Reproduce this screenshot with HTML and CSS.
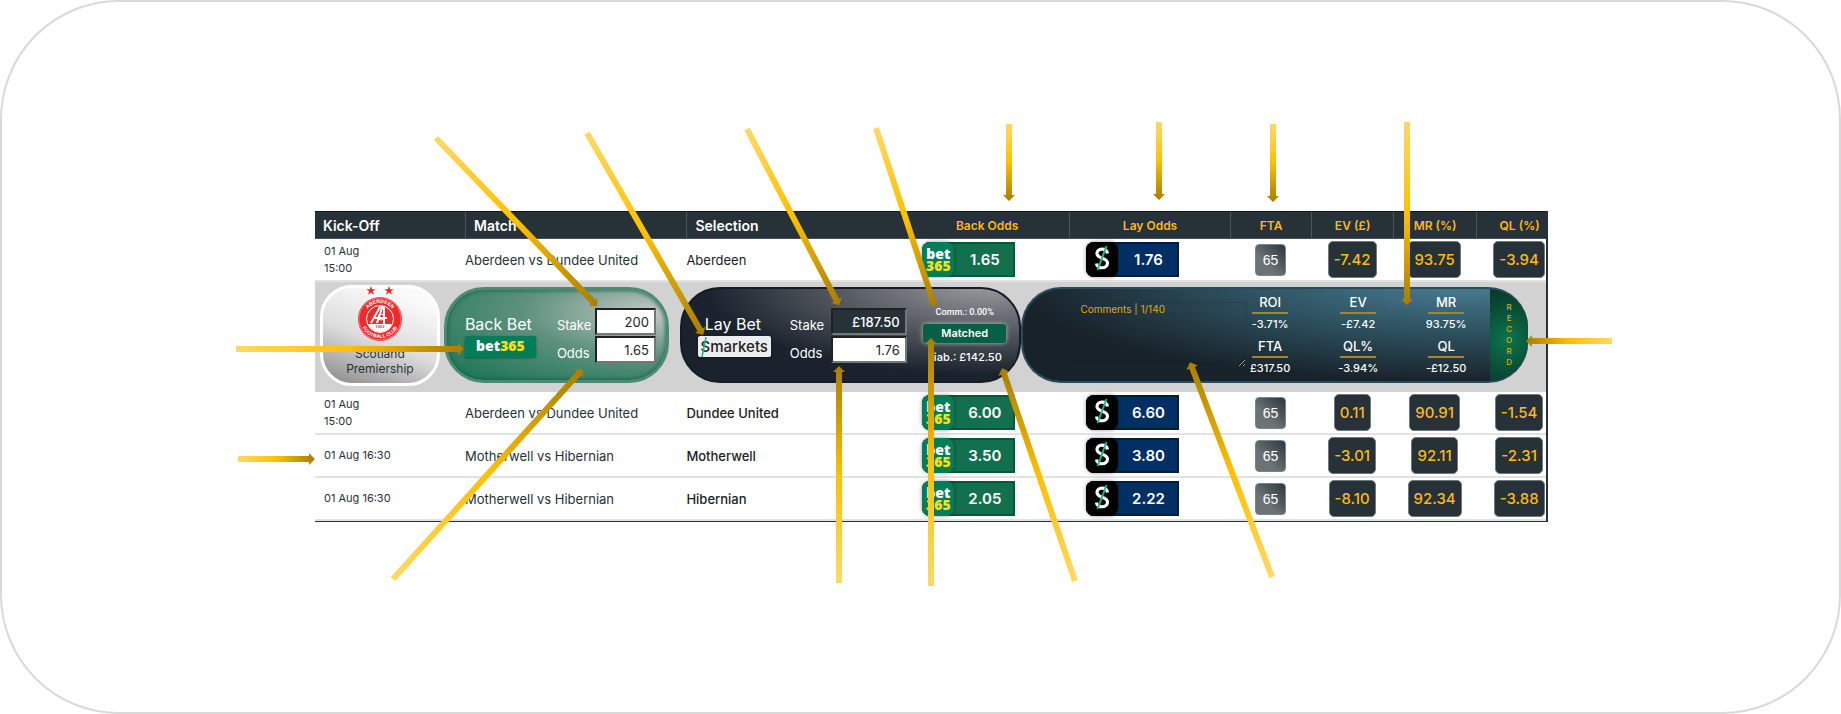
FILE: index.html
```html
<!DOCTYPE html>
<html lang="en">
<head>
<meta charset="utf-8">
<title>Odds matcher guide</title>
<link rel="stylesheet" href="styles.css">
</head>
<body>
<svg class="defs" width="0" height="0" aria-hidden="true">
  <defs>
    <linearGradient id="gold"><stop offset="0" stop-color="#ffd966"/><stop offset=".5" stop-color="#ffc000"/><stop offset=".53" stop-color="#f7bb05"/><stop offset=".9" stop-color="#b88a00"/><stop offset="1" stop-color="#a87e00"/></linearGradient>
    <symbol id="smk" viewBox="0 0 32 35">
      <path d="M21.500 11.500C20.500 5.500 11 6 11 11.500C11 17 21.500 15.500 21.500 21C21.500 27 11 27.500 10.500 21.500" fill="none" stroke="#fff" stroke-width="3.200"/>
      <path d="M20.500 4L11.500 28" stroke="#18b98a" stroke-width="2"/>
    </symbol>
  </defs>
</svg>
<main class="frame">
  <table class="odds">
    <colgroup><col class="c-time"><col class="c-match"><col class="c-sel"><col class="c-back"><col class="c-lay"><col class="c-fta"><col class="c-ev"><col class="c-mr"><col class="c-ql"></colgroup>
    <thead>
      <tr><th class="main">Kick-Off</th><th class="main line">Match</th><th class="main line">Selection</th><th>Back Odds</th><th class="line">Lay Odds</th><th class="line">FTA</th><th class="line">EV (£)</th><th class="line">MR (%)</th><th class="line last">QL (%)</th></tr>
    </thead>
    <tbody>
      <tr>
        <td class="time">01 Aug<br>15:00</td><td class="match">Aberdeen vs Dundee United</td><td class="sel">Aberdeen</td>
        <td class="book"><div class="chip back"><span class="logo b365"><b>bet</b><b class="y">365</b></span><span class="price">1.65</span></div></td>
        <td class="book"><div class="chip lay"><span class="logo"><svg><use href="#smk"/></svg></span><span class="price">1.76</span></div></td>
        <td class="num"><span class="fta">65</span></td><td class="num"><span class="pill">-7.42</span></td><td class="num"><span class="pill">93.75</span></td><td class="num last"><span class="pill">-3.94</span></td>
      </tr>
      <tr class="detail">
        <td colspan="9">
          <div class="panels">
            <section class="league">
              <svg class="crest" viewBox="0 0 46 56" role="img" aria-label="Aberdeen Football Club">
                <g fill="#ee2a2e"><path id="star" d="M14 0l1.200 3.200h3.500l-2.800 2.100 1.100 3.400-3-2.100-3 2.100 1.100-3.400-2.800-2.100h3.500z"/><use href="#star" x="18"/><circle cx="23" cy="33" r="22"/></g>
                <circle cx="23" cy="33" r="21" fill="none" stroke="#f9a5a6" stroke-width=".6"/>
                <circle cx="23" cy="33" r="13.500" fill="none" stroke="#fff" stroke-width="1"/>
                <path d="M11 38h24a13 13 0 0 1-24 0z" fill="#fff"/>
                <path d="M14 37L23 21h4v17M16 32h14M20 37l5-15" fill="none" stroke="#fff" stroke-width="2"/>
                <circle cx="24" cy="31" r="3" fill="none" stroke="#fff"/>
                <path id="arcT" d="M7 33a16 16 0 0 1 32 0" fill="none"/><path id="arcB" d="M3 32a20 20 0 0 0 40 0" fill="none"/>
                <g class="crest-text"><text><textPath href="#arcT" startOffset="50%">ABERDEEN</textPath></text><text><textPath href="#arcB" startOffset="50%">FOOTBALL CLUB</textPath></text></g>
                <text x="23" y="42" class="crest-year">1903</text>
              </svg>
              <p>Scotland<br>Premiership</p>
            </section>
            <section class="bet backbet">
              <div class="brand"><h2>Back Bet</h2><span class="bet365">bet<b>365</b></span></div>
              <div class="fields"><label for="bs">Stake</label><input id="bs" value="200"><label for="bo">Odds</label><input id="bo" value="1.65"></div>
            </section>
            <section class="bet laybet">
              <div class="brand"><h2>Lay Bet</h2><span class="smarkets">Smarkets<svg viewBox="0 0 8 22"><path d="M6 1L2 21" stroke="#18b98a" stroke-width="1.500"/></svg></span></div>
              <div class="fields"><label for="ls">Stake</label><input id="ls" class="dark" value="£187.50"><label for="lo">Odds</label><input id="lo" value="1.76"></div>
              <div class="status"><small>Comm.: 0.00%</small><button type="button">Matched</button><span>Liab.: £142.50</span></div>
            </section>
            <section class="info">
              <textarea aria-label="Comments" placeholder="Comments | 1/140"></textarea>
              <dl>
                <div><dt>ROI</dt><dd>-3.71%</dd></div><div><dt>EV</dt><dd>-£7.42</dd></div><div><dt>MR</dt><dd>93.75%</dd></div>
                <div><dt>FTA</dt><dd>£317.50</dd></div><div><dt>QL%</dt><dd>-3.94%</dd></div><div><dt>QL</dt><dd>-£12.50</dd></div>
              </dl>
              <button type="button" class="record"><span>RECORD</span></button>
            </section>
          </div>
        </td>
      </tr>
      <tr>
        <td class="time">01 Aug<br>15:00</td><td class="match">Aberdeen vs Dundee United</td><td class="sel strong">Dundee United</td>
        <td class="book"><div class="chip back"><span class="logo b365"><b>bet</b><b class="y">365</b></span><span class="price">6.00</span></div></td>
        <td class="book"><div class="chip lay"><span class="logo"><svg><use href="#smk"/></svg></span><span class="price">6.60</span></div></td>
        <td class="num"><span class="fta">65</span></td><td class="num"><span class="pill">0.11</span></td><td class="num"><span class="pill">90.91</span></td><td class="num last"><span class="pill">-1.54</span></td>
      </tr>
      <tr>
        <td class="time">01 Aug 16:30</td><td class="match">Motherwell vs Hibernian</td><td class="sel strong">Motherwell</td>
        <td class="book"><div class="chip back"><span class="logo b365"><b>bet</b><b class="y">365</b></span><span class="price">3.50</span></div></td>
        <td class="book"><div class="chip lay"><span class="logo"><svg><use href="#smk"/></svg></span><span class="price">3.80</span></div></td>
        <td class="num"><span class="fta">65</span></td><td class="num"><span class="pill">-3.01</span></td><td class="num"><span class="pill">92.11</span></td><td class="num last"><span class="pill">-2.31</span></td>
      </tr>
      <tr>
        <td class="time">01 Aug 16:30</td><td class="match">Motherwell vs Hibernian</td><td class="sel strong">Hibernian</td>
        <td class="book"><div class="chip back"><span class="logo b365"><b>bet</b><b class="y">365</b></span><span class="price">2.05</span></div></td>
        <td class="book"><div class="chip lay"><span class="logo"><svg><use href="#smk"/></svg></span><span class="price">2.22</span></div></td>
        <td class="num"><span class="fta">65</span></td><td class="num"><span class="pill">-8.10</span></td><td class="num"><span class="pill">92.34</span></td><td class="num last"><span class="pill">-3.88</span></td>
      </tr>
    </tbody>
  </table>
  <svg class="arrows" viewBox="0 0 1841 714" aria-hidden="true">
    <g fill="url(#gold)">
      <path transform="translate(436 138) rotate(46.200)" d="M0-3H227V-6L233 0L227 6V3H0z"/>
      <path transform="translate(587 133) rotate(60.100)" d="M0-3H227V-6L233 0L227 6V3H0z"/>
      <path transform="translate(747 129) rotate(62.400)" d="M0-3H193V-6L199 0L193 6V3H0z"/>
      <path transform="translate(876 128) rotate(71.800)" d="M0-3H182V-6L188 0L182 6V3H0z"/>
      <path transform="translate(1009 124) rotate(90)" d="M0-3H71V-6L77 0L71 6V3H0z"/>
      <path transform="translate(1159 122) rotate(90)" d="M0-3H72V-6L78 0L72 6V3H0z"/>
      <path transform="translate(1273 124) rotate(90)" d="M0-3H72V-6L78 0L72 6V3H0z"/>
      <path transform="translate(1407 122) rotate(90)" d="M0-3H177V-6L183 0L177 6V3H0z"/>
      <path transform="translate(1612 341) rotate(180)" d="M0-3H80V-6L86 0L80 6V3H0z"/>
      <path transform="translate(236 349)" d="M0-3H222V-6L228 0L222 6V3H0z"/>
      <path transform="translate(238 459)" d="M0-3H71V-6L77 0L71 6V3H0z"/>
      <path transform="translate(393 579) rotate(-47.900)" d="M0-3H277V-6L283 0L277 6V3H0z"/>
      <path transform="translate(839 583) rotate(-90)" d="M0-3H211V-6L217 0L211 6V3H0z"/>
      <path transform="translate(931 586) rotate(-90)" d="M0-3H242V-6L248 0L242 6V3H0z"/>
      <path transform="translate(1075 581) rotate(-108.900)" d="M0-3H219V-6L225 0L219 6V3H0z"/>
      <path transform="translate(1272 577) rotate(-110.900)" d="M0-3H224V-6L230 0L224 6V3H0z"/>
    </g>
  </svg>
</main>
</body>
</html>
```
FILE: styles.css
```css
* { box-sizing: border-box; }
body { margin: 0; background: #fff; font-family: Inter, "Noto Sans", sans-serif; color: #263238; }
.defs { position: absolute; }
.frame { position: relative; min-height: 100vh; border: 2px solid #d9d9d9; border-radius: 119px; padding: 209px 15.8% 0 17%; }
.arrows { position: absolute; inset: -2px; width: calc(100% + 4px); height: calc(100% + 4px); pointer-events: none; }

.odds { width: 100%; table-layout: fixed; border-collapse: separate; border-spacing: 0; border-right: 2px solid #263238; border-bottom: 1px solid #263238; }
.c-time { width: 150px; }
.c-match { width: 18%; }
.c-sel { width: 17.8%; }
.c-back { width: 13.3%; }
.c-lay { width: 13.1%; }
.c-fta { width: 81px; }
.c-ev { width: 82px; }
.c-mr { width: 83px; }
.c-ql { width: 70px; }
th, td { padding: 0; }
th { height: 28px; background: #263238; border-top: 1px solid #11181c; border-bottom: 1px solid #455056; color: #fdb81e; font-size: 12px; font-weight: 600; }
th.main { padding-left: 8px; text-align: left; color: #fff; font-size: 14px; }
th.line { border-left: 1px solid #4a555a; }
td { height: 43px; border-bottom: 2px solid #e2e2e2; }
.time { padding-left: 9px; font-size: 11px; line-height: 17px; }
.match { font-size: 13px; }
.sel { font-size: 13px; color: #1a2226; }
.strong { font-weight: 500; }
.book { padding-left: 17px; }
.num { text-align: center; }
.num.last, th.last { padding-left: 16px; }

.chip { display: flex; width: 93px; height: 35px; color: #fff; border-radius: 8px 0 0 8px; }
.chip.back { background: #13704f; box-shadow: inset 0 0 0 2px #07573a; }
.chip.lay { background: #003063; box-shadow: inset 0 0 0 2px #071d38; }
.logo { display: flex; flex-direction: column; justify-content: center; width: 32px; border-radius: 8px; background: #000; box-shadow: 0 0 4px #0006; }
.logo svg { width: 32px; height: 35px; }
.b365 { background: #037c5a; font: 800 14px/12px "Open Sans", sans-serif; text-align: center; }
.b365 b { font-weight: 800; }
.y { color: #f8e01c; }
.price { flex: 1; text-align: center; font-size: 15px; font-weight: 600; line-height: 36px; }
.fta { display: inline-block; width: 31px; height: 32px; border: 1px solid #78858a; border-radius: 4px; background: linear-gradient(225deg, #2b383e, #6b7375 65%); color: #fff; font: 14px/30px "Liberation Sans", sans-serif; vertical-align: middle; }
.pill { display: inline-block; padding: 0 5px; border: 1px solid #707a7e; border-radius: 5px; background: #263238; color: #fdb81e; font-size: 15px; font-weight: 500; line-height: 35px; vertical-align: middle; }

.detail td { height: 110px; padding-bottom: 4px; background: #d2d2d2; border: 0; }
.panels { display: grid; grid-template-columns: 120fr 229fr 353fr 507fr; padding: 0 18px 0 5px; align-items: center; }
.league { height: 101px; border: 3px solid #fff; border-radius: 32px; background: linear-gradient(200deg, #fafafa 15%, #ddd 55%, #888); text-align: center; }
.crest { display: block; width: 46px; height: 56px; margin: -2px auto 4px; }
.crest-text { fill: #fff; font: 700 5px "Liberation Sans", sans-serif; text-anchor: middle; }
.crest-year { fill: #ee2a2e; font: 700 4px "Liberation Sans", sans-serif; text-anchor: middle; }
.league p { margin: 0; font-size: 12px; line-height: 15px; }
.bet { display: flex; align-items: center; height: 96px; border-radius: 40px; color: #fff; }
.backbet { margin: 0 0 0 4px; padding-left: 18px; border: 3px solid #4d8a76; background: radial-gradient(ellipse at 95% 25%, #c4c9c6, #5e917e 45%, #1b7556 95%); box-shadow: inset 0 0 4px #0b5a3f; }
.laybet { margin: 0 0 0 11px; padding-left: 16px; border: 2px solid #141c28; background: radial-gradient(ellipse at 90% -5%, #999ca0, #5a5e65 32%, #1a222d 66%); }
.brand { width: 74px; }
h2 { margin: 0 0 2px; font-size: 16px; font-weight: 400; line-height: 20px; white-space: nowrap; }
.laybet h2 { padding-left: 7px; }
.bet365, .smarkets { display: block; height: 21px; border-radius: 2px; text-align: center; box-shadow: 0 1px 3px #0006; }
.bet365 { width: 71px; background: #037c5a; font: 800 14px/20px "Open Sans", sans-serif; }
.bet365 b { color: #f8e01c; font-weight: 800; }
.smarkets { position: relative; width: 73px; background: #eceeed; color: #222; font: 500 15px/21px Inter, sans-serif; }
.smarkets svg { position: absolute; left: 2px; top: 0; width: 8px; height: 22px; }
.fields { display: grid; grid-template-columns: 38px 61px; grid-auto-rows: 28px; align-items: center; margin-left: 18px; padding-top: 1px; }
.laybet .fields { grid-template-columns: 41px 76px; }
.fields label { font-size: 13px; padding-top: 6px; }
.fields input { width: 100%; height: 27px; padding: 0 5px; border: 2px inset #767676; border-radius: 0; background: #fff; color: #1a2226; text-align: right; font: 400 13px Inter, sans-serif; }
.fields input.dark { background: #263238; color: #fff; font-weight: 500; }
.status { display: flex; flex-direction: column; align-items: center; gap: 6px; margin-left: 16px; width: 84px; white-space: nowrap; }
.status small { font: 500 9px/12px Roboto, sans-serif; }
.status button { width: 83px; height: 19px; padding: 0; border: 0; border-radius: 3px; background: #076045; color: #fff; box-shadow: 0 0 5px #bbb; font: 600 11px Inter, sans-serif; }
.status span { font-size: 11px; line-height: 16px; font-weight: 500; }
.info { display: flex; align-items: center; height: 96px; padding-left: 47px; border: 2px solid #2a4b5a; border-right: 0; border-radius: 40px; background: radial-gradient(ellipse at 88% -10%, #4b8197, #2e5260 36%, #18222a 72%); color: #fff; overflow: hidden; }
.info textarea { flex: 1; min-width: 0; height: 66px; margin: 0; padding: 0 9px; border: 1px solid #1c2b3255; background: transparent; color: #fff; font: 10px/12px Inter, sans-serif; resize: both; }
.info textarea::placeholder { color: #e2a41c; opacity: 1; }
.info dl { display: grid; grid-template-columns: repeat(3, 88px); margin: 0 0 0 5px; width: 238px; row-gap: 3px; text-align: center; }
.info dl div { width: 36px; }
dt { border-bottom: 2px solid #ac8322; font-size: 13px; line-height: 19px; font-weight: 500; }
dd { display: flex; justify-content: center; margin: 0; font-size: 11px; line-height: 20px; font-weight: 500; white-space: nowrap; }
.record { width: 38px; height: 96px; padding: 0; border: 0; background: radial-gradient(circle at 45% 55%, #08764e, #0b5138 50%, #063425); color: #d6ae22; font: 500 8px/11px Inter, sans-serif; }
.record span { display: block; width: 7px; margin: 0 auto; overflow-wrap: anywhere; }
```
